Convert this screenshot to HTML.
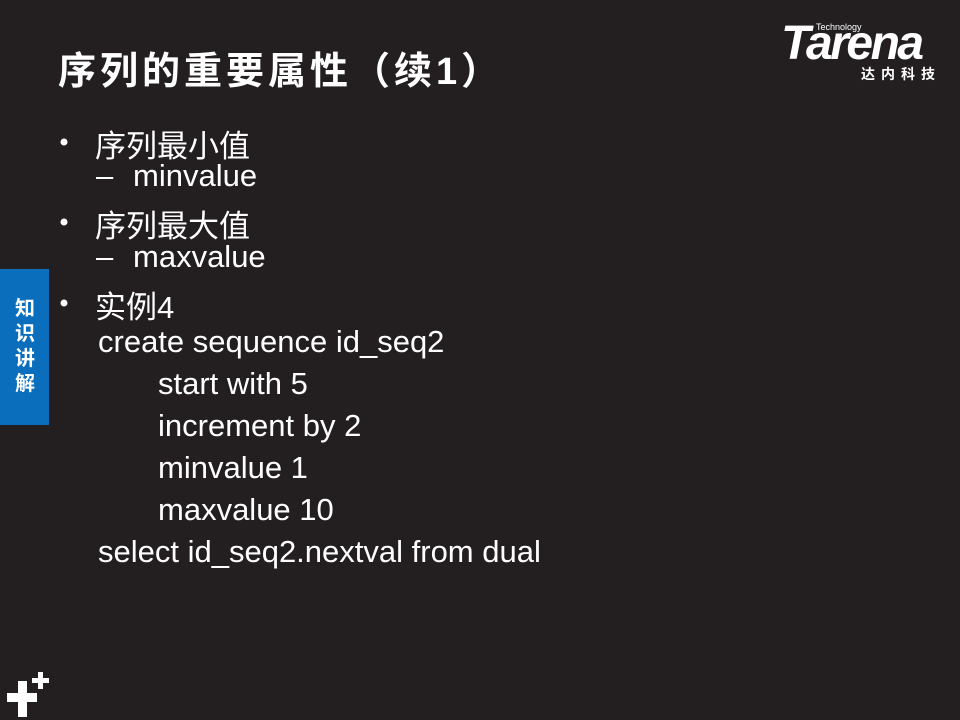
<!DOCTYPE html>
<html><head><meta charset="utf-8"><style>
body{margin:0;width:960px;height:720px;background:#231f20;position:relative;overflow:hidden;font-family:"Liberation Sans","Noto Sans CJK SC",sans-serif;color:#fff}
.a{position:absolute;white-space:nowrap}
.t{left:58px;top:40px;font-size:38px;font-weight:bold;letter-spacing:4px}
.l{font-size:31px}
.c{font-size:31px}
.b{position:absolute;left:59px;width:10px;height:10px;border-radius:50%;background:#fff;transform:scale(0.7)}
.side{position:absolute;left:0;top:269px;width:49px;height:156px;background:#0a6ebd}
.side div{position:absolute;left:13px;top:28px;width:24px;font-size:20px;font-weight:bold;line-height:25px;text-align:center}
</style></head><body>
<div class="a t">序列的重要属性（续1）</div>
<div class="a" style="left:816px;top:22px;font-size:9px">Technology</div>
<div class="a" style="left:781px;top:16px;font-size:48px;font-weight:bold;font-style:italic;letter-spacing:-2.5px">Tarena</div>
<div class="a" style="left:861px;top:64px;font-size:14px;font-weight:bold;letter-spacing:6px">达内科技</div>
<div class="b" style="top:137px"></div><div class="a l" style="left:95px;top:121px">序列最小值</div>
<div class="a l" style="left:96px;top:158px">–</div><div class="a l" style="left:133px;top:158px">minvalue</div>
<div class="b" style="top:217px"></div><div class="a l" style="left:95px;top:201px">序列最大值</div>
<div class="a l" style="left:96px;top:239px">–</div><div class="a l" style="left:133px;top:239px">maxvalue</div>
<div class="b" style="top:298px"></div><div class="a l" style="left:95px;top:282px">实例4</div>
<div class="a c" style="left:98px;top:324px">create sequence id_seq2</div>
<div class="a c" style="left:158px;top:366px">start with 5</div>
<div class="a c" style="left:158px;top:408px">increment by 2</div>
<div class="a c" style="left:158px;top:450px">minvalue 1</div>
<div class="a c" style="left:158px;top:492px">maxvalue 10</div>
<div class="a c" style="left:98px;top:534px">select id_seq2.nextval from dual</div>
<div class="side"><div>知识讲解</div></div>
<div style="position:absolute;left:7px;top:693px;width:30px;height:9px;background:#fff"></div>
<div style="position:absolute;left:18px;top:681px;width:9px;height:36px;background:#fff"></div>
<div style="position:absolute;left:32px;top:678px;width:17px;height:5px;background:#fff"></div>
<div style="position:absolute;left:38px;top:672px;width:5px;height:17px;background:#fff"></div>
</body></html>
